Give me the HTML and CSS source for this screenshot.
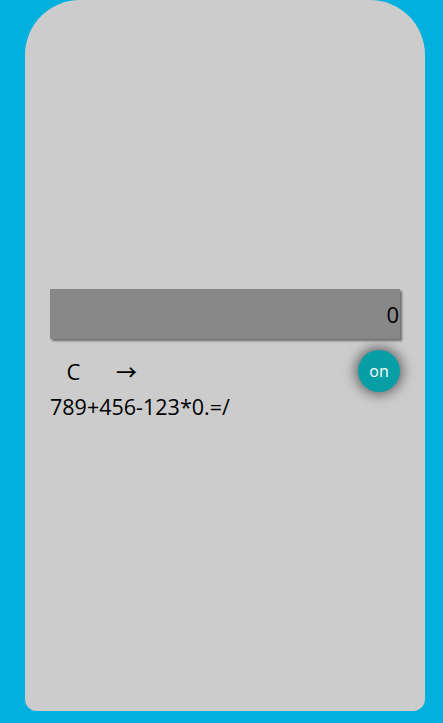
FILE: index.html
```html
<!DOCTYPE html>
<html>
<head>
<meta charset="utf-8">
<link rel="stylesheet" href="styles.css">
</head>
<body>
<div class="calc">
  <div class="display">0</div>
  <div class="controls">
    <button class="ctl">C</button>
    <button class="ctl arrow">→</button>
    <button class="on">on</button>
  </div>
  <div class="keys"><button class="key">7</button><button class="key">8</button><button class="key">9</button><button class="key">+</button><button class="key">4</button><button class="key">5</button><button class="key">6</button><button class="key">-</button><button class="key">1</button><button class="key">2</button><button class="key">3</button><button class="key">*</button><button class="key">0</button><button class="key">.</button><button class="key">=</button><button class="key">/</button></div>
</div>
</body>
</html>
```
FILE: styles.css
```css
html, body {
  margin: 0;
  padding: 0;
  height: 100%;
}
body {
  background: #02b0dd;
  font-family: "Open Sans", "Noto Sans", sans-serif;
}
.calc {
  box-sizing: border-box;
  width: 400px;
  height: 711px;
  margin: 0 0 0 25px;
  background: #cccccc;
  border-radius: 55px 55px 12px 12px;
  padding: 289px 25px 0 25px;
}
.display {
  box-sizing: border-box;
  height: 50px;
  width: 350px;
  background: #888888;
  box-shadow: 2px 2px 2px #6e6e6e;
  text-align: right;
  font-size: 22px;
  line-height: 50px;
  padding-right: 1px;
  color: #000;
}
.controls {
  display: flex;
  align-items: center;
  gap: 6px;
  margin-top: 11px;
  height: 42px;
}
button {
  font-family: inherit;
  background: none;
  border: none;
  padding: 0;
  margin: 0;
  color: #000;
  cursor: pointer;
}
.ctl {
  font-size: 22px;
  width: 47px;
  line-height: 30px;
}
.arrow {
  font-family: "Noto Sans CJK SC", sans-serif;
  font-size: 21px;
  font-weight: 500;
}
.on {
  margin-left: auto;
  width: 42px;
  height: 42px;
  border-radius: 50%;
  background: #089ea6;
  color: #fff;
  font-size: 16px;
  font-weight: 500;
  line-height: 40px;
  box-shadow: 0 0 12px 3px #6a6a6a;
}
.keys {
  display: flex;
}
.key {
  font-size: 21.5px;
  line-height: 30px;
}
```
